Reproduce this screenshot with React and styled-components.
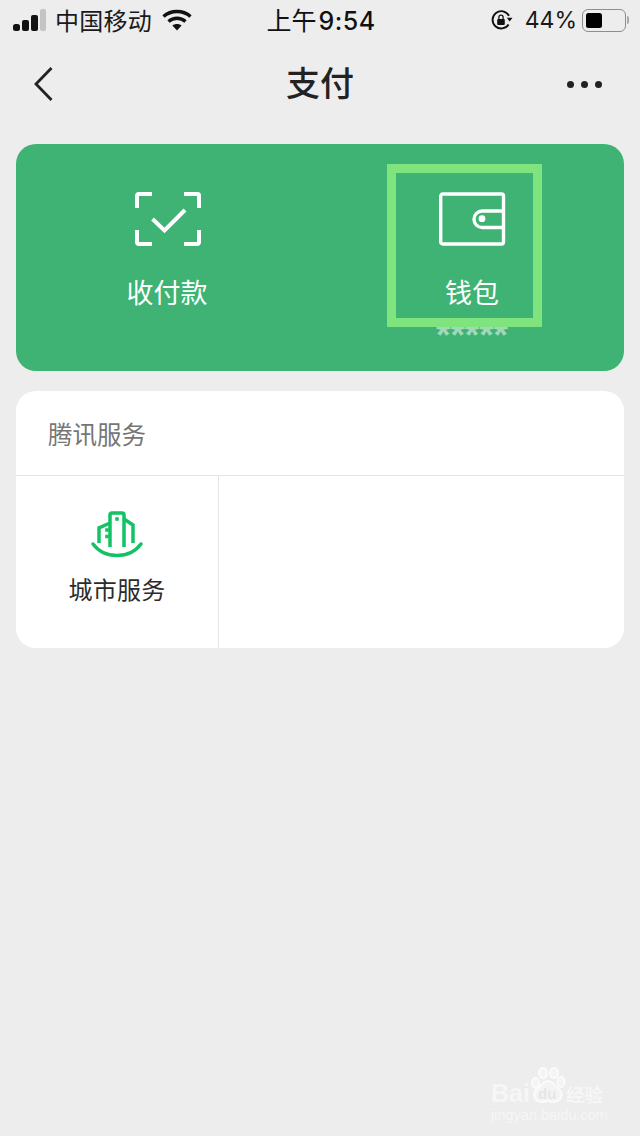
import React from 'react';
import styled, { createGlobalStyle } from 'styled-components';

const cjk = `"Noto Sans CJK SC", "Liberation Sans", sans-serif`;

const GlobalStyle = createGlobalStyle`
  html, body {
    margin: 0;
    padding: 0;
    background: #ededed;
    font-family: ${cjk};
  }
`;

function SignalIcon() {
  return (
    <svg width="34" height="22" viewBox="0 0 34 22">
      <rect x="0" y="15" width="7" height="7" rx="2.5" fill="#111" />
      <rect x="9" y="11" width="7" height="11" rx="2" fill="#111" />
      <rect x="18" y="6" width="7" height="16" rx="2" fill="#111" />
      <rect x="27" y="0" width="6" height="22" rx="2" fill="#c4c4c4" />
    </svg>
  );
}

function WifiIcon() {
  return (
    <svg width="30" height="22" viewBox="0 0 30 22" fill="none" stroke="#111" strokeWidth="3.4">
      <path d="M1.5 7.5C9 .8 21 .8 28.5 7.5" />
      <path d="M6.5 12.5C11.5 8.2 18.5 8.2 23.5 12.5" />
      <path d="M15 21.5L10.4 16.6C13 14.6 17 14.6 19.6 16.6Z" fill="#111" stroke="none" />
    </svg>
  );
}

function RotationLockIcon() {
  return (
    <svg width="22" height="22" viewBox="0 0 22 22" fill="none">
      <path d="M17.6 15.5A8.7 8.700 0 1 1 18 6.800" stroke="#111" strokeWidth="1.9" />
      <path d="M15.800 8.800h5.700L18.600 12.600Z" fill="#111" />
      <rect x="6.200" y="10" width="7.600" height="6" rx="1" fill="#111" />
      <path d="M7.900 10.200V8.300a2.100 2.100 0 0 1 4.200 0v1.900" stroke="#111" strokeWidth="1.300" />
    </svg>
  );
}

function BackIcon() {
  return (
    <svg width="22" height="36" viewBox="0 0 22 36" fill="none" stroke="#222" strokeWidth="2.8">
      <path d="M18.500 2L3 18l15.500 16" />
    </svg>
  );
}

function ScanCheckIcon() {
  return (
    <svg width="68" height="56" viewBox="0 0 68 56" fill="none" stroke="#fff" strokeWidth="4">
      <path d="M18 3H4.500A1.500 1.500 0 0 0 3 4.500V17" />
      <path d="M50 3h13.500A1.500 1.500 0 0 1 65 4.500V17" />
      <path d="M18 53H4.500A1.500 1.500 0 0 1 3 51.500V39" />
      <path d="M50 53h13.500a1.500 1.500 0 0 0 1.500-1.500V39" />
      <path d="M18.500 28L30.500 39.500 51 19" />
    </svg>
  );
}

function WalletIcon() {
  return (
    <svg width="68" height="56" viewBox="0 0 68 56" fill="none" stroke="#fff" strokeWidth="3.4">
      <rect x="2.700" y="3" width="62.800" height="50" rx="2" />
      <path d="M65.500 20H44.250a8.250 8.250 0 0 0 0 16.500H65.500" />
      <circle cx="44" cy="27.700" r="3.400" fill="#fff" stroke="none" />
    </svg>
  );
}

function CityIcon() {
  return (
    <svg width="54" height="48" viewBox="0 0 54 48" fill="none" stroke="#12c264" strokeWidth="3.500">
      <path d="M3 34C9 42 18 45.500 27 45.500S45 42 51 34" strokeLinecap="round" />
      <path d="M9 33V18L20 13" />
      <path d="M20 37V5a2 2 0 0 1 2-2h10a2 2 0 0 1 2 2V37" />
      <path d="M34 9L43 15V33" />
      <path d="M25.200 9h3.600M15.200 20h3.600M15.200 26.500h3.600" />
    </svg>
  );
}

function PawIcon() {
  return (
    <svg width="36" height="38" viewBox="0 0 36 38" fill="#f4f4f4" stroke="#fbfbfb" strokeWidth="2">
      <ellipse cx="5.500" cy="16" rx="3.500" ry="5" />
      <ellipse cx="13" cy="6" rx="4" ry="5" />
      <ellipse cx="24" cy="6" rx="4" ry="5" />
      <ellipse cx="31" cy="15" rx="3.500" ry="5" />
      <path d="M18 14c5 0 6.500 4.500 11 8 5 4.500 2 13-5.500 13-2.500 0-3.500-1-5.500-1s-3.500 1-6 1c-7.500 0-10.500-8.500-5-13 4.500-3.500 6-8 11-8Z" />
    </svg>
  );
}

function Watermark() {
  return (
    <WatermarkBox>
      <WatermarkRow>
        <WatermarkBrand>Bai</WatermarkBrand>
        <PawBox>
          <PawIcon />
          <PawText>du</PawText>
        </PawBox>
        <WatermarkCjk>经验</WatermarkCjk>
      </WatermarkRow>
      <WatermarkUrl>jingyan.baidu.com</WatermarkUrl>
    </WatermarkBox>
  );
}

function App() {
  return (
    <Page>
      <GlobalStyle />
      <StatusBar>
        <StatusSide>
          <SignalIcon />
          <Carrier>中国移动</Carrier>
          <WifiIcon />
        </StatusSide>
        <Clock>上午<ClockDigits>9:54</ClockDigits></Clock>
        <StatusSide $right>
          <RotationLockIcon />
          <BatteryText>44%</BatteryText>
          <Battery><BatteryFill style={{ width: `${44 * 0.37}px` }} /></Battery>
          <BatteryCap />
        </StatusSide>
      </StatusBar>

      <NavBar>
        <BackButton><BackIcon /></BackButton>
        <NavTitle>支付</NavTitle>
        <MoreButton><Dot /><Dot /><Dot /></MoreButton>
      </NavBar>

      <PayCard>
        <PayAction>
          <ScanCheckIcon />
          <PayLabel $wide>收付款</PayLabel>
        </PayAction>
        <PayAction>
          <WalletIcon />
          <PayLabel>钱包</PayLabel>
          <Stars>*****</Stars>
          <Highlight />
        </PayAction>
      </PayCard>

      <ServiceCard>
        <ServiceHeader>腾讯服务</ServiceHeader>
        <ServiceGrid>
          <ServiceCell>
            <CityIcon />
            <ServiceName>城市服务</ServiceName>
          </ServiceCell>
        </ServiceGrid>
      </ServiceCard>

      <Watermark />
    </Page>
  );
}

const Page = styled.div`
  position: relative;
  width: 640px;
  height: 1136px;
  overflow: hidden;
  background: #ededed;
  color: #111;
`;

const StatusBar = styled.div`
  display: flex;
  align-items: center;
  justify-content: space-between;
  height: 40px;
  padding: 0 11px 0 13px;
`;

const StatusSide = styled.div`
  display: flex;
  align-items: center;
  width: 200px;
  justify-content: ${p => (p.$right ? 'flex-end' : 'flex-start')};
`;

const Carrier = styled.span`
  font-size: 24px;
  line-height: 40px;
  letter-spacing: 0.250px;
  margin: 0 10px 0 8px;
  color: #1a1a1a;
`;

const Clock = styled.span`
  font-size: 25px;
  line-height: 40px;
  color: #111;
`;

const ClockDigits = styled.span`
  font-family: "Inter", "Liberation Sans", sans-serif;
  font-weight: 500;
  font-size: 25px;
  margin-left: 2px;
  letter-spacing: 0.500px;
`;

const BatteryText = styled.span`
  font-family: "Inter", "Liberation Sans", sans-serif;
  font-size: 23px;
  line-height: 42px;
  margin: 0 5px 0 12px;
  color: #1a1a1a;
`;

const Battery = styled.div`
  box-sizing: border-box;
  width: 44px;
  height: 23px;
  padding: 3px;
  border: 1.500px solid #8e8e8e;
  border-radius: 6px;
`;

const BatteryFill = styled.div`
  height: 100%;
  background: #000;
  border-radius: 2.500px;
`;

const BatteryCap = styled.div`
  width: 2px;
  height: 8px;
  margin-left: 1px;
  background: #a8a8a8;
  border-radius: 0 2px 2px 0;
`;

const NavBar = styled.div`
  display: flex;
  align-items: center;
  justify-content: space-between;
  height: 88px;
  padding: 0 30px;
`;

const BackButton = styled.div`
  display: flex;
  width: 80px;
  padding-left: 3px;
`;

const NavTitle = styled.h1`
  margin: 0 0 4px;
  font-size: 34px;
  font-weight: 500;
  color: #222;
  line-height: 84px;
`;

const MoreButton = styled.div`
  display: flex;
  justify-content: flex-end;
  gap: 7px;
  width: 83px;
  padding-right: 8px;
  box-sizing: border-box;
`;

const Dot = styled.span`
  width: 7px;
  height: 7px;
  border-radius: 50%;
  background: #222;
`;

const PayCard = styled.div`
  display: grid;
  grid-template-columns: 1fr 1fr;
  height: 227px;
  margin: 16px 16px 0;
  border-radius: 20px;
  background: #3eb373;
`;

const PayAction = styled.div`
  position: relative;
  display: flex;
  flex-direction: column;
  align-items: center;
  padding-top: 47px;
`;

const PayLabel = styled.div`
  margin-top: 25px;
  margin-right: ${p => (p.$wide ? '2px' : '0')};
  font-size: 27px;
  line-height: 40px;
  color: #fff;
`;

const Stars = styled.div`
  font-family: "Liberation Sans", sans-serif;
  font-size: 37px;
  font-weight: 700;
  line-height: 37px;
  margin-top: 5px;
  color: #9fd9b8;
`;

const Highlight = styled.div`
  position: absolute;
  top: 20px;
  left: 67px;
  box-sizing: border-box;
  width: 155px;
  height: 163px;
  border: 9px solid #7fe47e;
  pointer-events: none;
`;

const ServiceCard = styled.div`
  height: 257px;
  margin: 20px 16px 0;
  border-radius: 20px;
  background: #fff;
  overflow: hidden;
`;

const ServiceHeader = styled.div`
  box-sizing: border-box;
  height: 85px;
  padding-left: 32px;
  font-size: 24.500px;
  line-height: 86px;
  color: #767676;
  border-bottom: 1px solid #e4e4e4;
`;

const ServiceGrid = styled.div`
  display: grid;
  grid-template-columns: 203px;
  height: 172px;
`;

const ServiceCell = styled.div`
  display: flex;
  flex-direction: column;
  align-items: center;
  padding-top: 34px;
  border-right: 1px solid #e4e4e4;
`;

const ServiceName = styled.div`
  margin-top: 11px;
  font-size: 24px;
  line-height: 40px;
  letter-spacing: 0.300px;
  color: #2b2b2b;
`;

const WatermarkBox = styled.div`
  position: absolute;
  left: 491px;
  top: 1067px;
  display: flex;
  flex-direction: column;
  width: 116px;
  color: #f6f6f6;
`;

const WatermarkRow = styled.div`
  display: flex;
  align-items: flex-end;
  height: 38px;
`;

const WatermarkBrand = styled.div`
  font-family: "Liberation Sans", sans-serif;
  font-size: 25px;
  font-weight: 700;
  line-height: 24px;
  width: 39px;
  white-space: nowrap;
`;

const PawBox = styled.div`
  position: relative;
  display: flex;
  width: 36px;
  height: 38px;
`;

const PawText = styled.span`
  position: absolute;
  left: 8px;
  bottom: 4px;
  font-family: "Liberation Sans", sans-serif;
  font-size: 15px;
  font-weight: 700;
  line-height: 15px;
  color: #e6e6e6;
`;

const WatermarkCjk = styled.div`
  font-size: 18.500px;
  font-weight: 700;
  line-height: 22px;
  white-space: nowrap;
`;

const WatermarkUrl = styled.div`
  font-family: "Liberation Sans", sans-serif;
  font-size: 14.500px;
  line-height: 16px;
  margin-top: 2px;
  white-space: nowrap;
`;

export default App;
